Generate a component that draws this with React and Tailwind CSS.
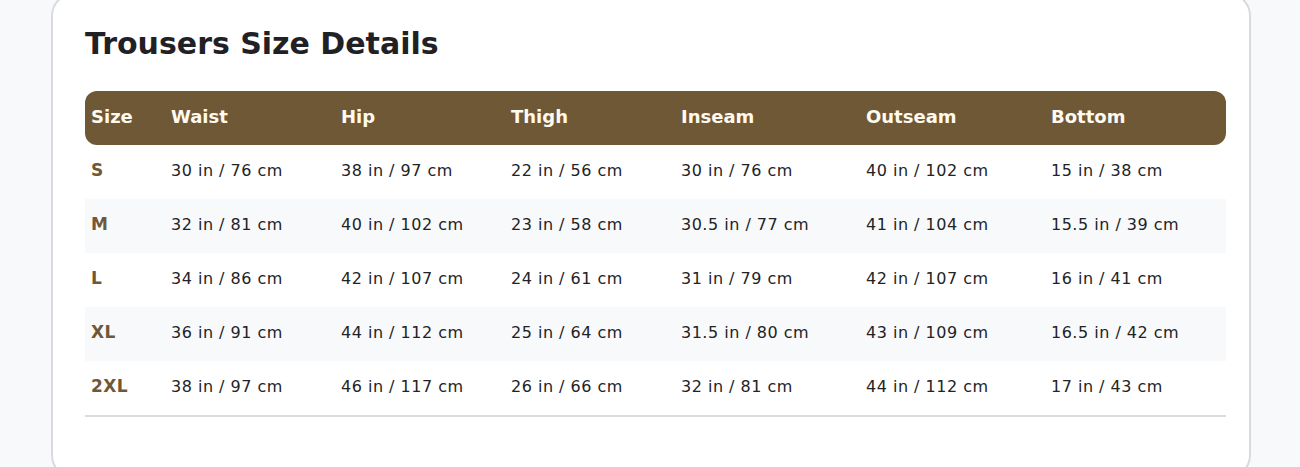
const rows = [
  { size: 'S', cells: ['30 in / 76 cm', '38 in / 97 cm', '22 in / 56 cm', '30 in / 76 cm', '40 in / 102 cm', '15 in / 38 cm'] },
  { size: 'M', cells: ['32 in / 81 cm', '40 in / 102 cm', '23 in / 58 cm', '30.5 in / 77 cm', '41 in / 104 cm', '15.5 in / 39 cm'] },
  { size: 'L', cells: ['34 in / 86 cm', '42 in / 107 cm', '24 in / 61 cm', '31 in / 79 cm', '42 in / 107 cm', '16 in / 41 cm'] },
  { size: 'XL', cells: ['36 in / 91 cm', '44 in / 112 cm', '25 in / 64 cm', '31.5 in / 80 cm', '43 in / 109 cm', '16.5 in / 42 cm'] },
  { size: '2XL', cells: ['38 in / 97 cm', '46 in / 117 cm', '26 in / 66 cm', '32 in / 81 cm', '44 in / 112 cm', '17 in / 43 cm'] },
];

const headers = ['Size', 'Waist', 'Hip', 'Thigh', 'Inseam', 'Outseam', 'Bottom'];

const cols = 'grid grid-cols-[80px_170px_170px_170px_185px_185px_181px]';

export default function App() {
  return (
    <div className="min-h-screen bg-[#f8f9fb] overflow-hidden font-['DejaVu_Sans',sans-serif]">
      <div className="ml-[51px] w-[1200px] -mt-[8px] bg-white border-2 border-[#d9dbe1] rounded-3xl pt-[32px] pl-[32px] pb-[60px]">
        <h1 className="text-3xl font-bold text-[#1f2125] mb-[29px]">Trousers Size Details</h1>

        <div className="w-[1141px] border-b-2 border-[#dcdcdc]">
          {/* Header */}
          <div className={`${cols} h-[54px] pb-[3px] items-center bg-[#6f5836] rounded-xl`}>
            {headers.map(h => (
              <div key={h} className="pl-[6px] text-[18px] font-bold text-[#fffaf0]">{h}</div>
            ))}
          </div>

          {rows.map((r, i) => (
            <div key={r.size} className={`${cols} h-[54px] pb-[2px] items-center ${i % 2 === 1 ? 'bg-[#f8f9fb]' : 'bg-white'}`}>
              <div className="pl-[6px] text-[17px] tracking-[0.4px] font-bold text-[#6f5836]">{r.size}</div>
              {r.cells.map((c, j) => (
                <div key={j} className="pl-[6px] text-[16px] tracking-[0.5px] text-[#222326]">{c}</div>
              ))}
            </div>
          ))}
        </div>
      </div>
    </div>
  );
}
